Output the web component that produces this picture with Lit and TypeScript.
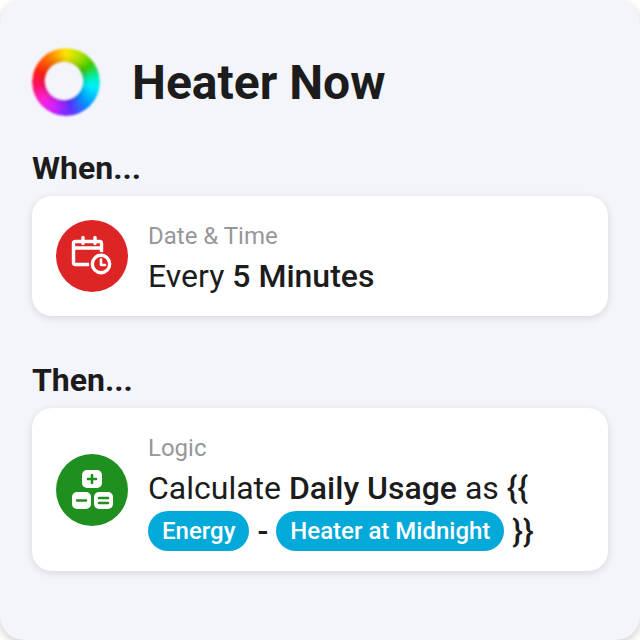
import { LitElement, html, css } from 'lit';
import { customElement } from 'lit/decorators.js';

@customElement('app-root')
export class AppRoot extends LitElement {
  static styles = css`
    :host {
      display: block;
      width: 640px;
      height: 640px;
      background: #fff;
      font-family: Roboto, sans-serif;
      color: #1c1c1c;
      overflow: hidden;
    }

    .page {
      box-sizing: border-box;
      width: 640px;
      height: 640px;
      padding: 48px 32px 0;
      background: #f4f4fb;
      border-radius: 24px;
      box-shadow: 0 3px 10px rgba(0, 0, 0, 0.2);
    }

    .header {
      display: flex;
      align-items: center;
      gap: 32px;
      height: 68px;
      margin-bottom: 32px;
    }

    .logo-blur {
      filter: blur(1px);
    }

    .logo {
      width: 68px;
      height: 68px;
      border-radius: 50%;
      background:
        radial-gradient(circle at 32px 33px, rgba(0, 0, 0, 0.14) 18px, transparent 26px),
        conic-gradient(
          #ffe600 0deg,
          #a8e000 30deg,
          #3fc800 55deg,
          #00f0b0 80deg,
          #00eeff 100deg,
          #0098ff 135deg,
          #6030ff 170deg,
          #d020ff 205deg,
          #ff20d0 235deg,
          #ff1060 265deg,
          #ff2010 290deg,
          #ff7a00 325deg,
          #ffe600 360deg
        );
      -webkit-mask: radial-gradient(circle at 32px 33px, transparent 18.5px, #000 20px);
      mask: radial-gradient(circle at 32px 33px, transparent 18.5px, #000 20px);
    }

    h1 {
      margin: 1px 0 -1px;
      font-size: 48px;
      line-height: 68px;
      font-weight: 700;
    }

    h2 {
      margin: 0 0 8px;
      font-size: 32px;
      line-height: 40px;
      font-weight: 700;
    }

    .card {
      box-sizing: border-box;
      display: flex;
      align-items: center;
      gap: 20px;
      padding: 24px 24px 16px;
      background: #fff;
      border-radius: 20px;
      box-shadow: 0 2px 8px rgba(0, 0, 0, 0.12);
      margin-bottom: 44px;
    }

    .icon {
      flex: none;
      width: 72px;
      height: 72px;
      border-radius: 50%;
    }

    .icon svg {
      display: block;
    }

    .icon.red {
      background: #de2526;
      margin-top: -8px;
    }

    .icon.green {
      background: #1f8f1f;
      margin-top: -7px;
    }

    .body {
      flex: 1;
      min-width: 0;
    }

    .kind {
      font-size: 24px;
      line-height: 32px;
      color: #97979b;
    }

    .line {
      font-size: 32px;
      line-height: 48px;
    }

    .tokens {
      display: flex;
      align-items: flex-start;
      gap: 8px;
      height: 44px;
      margin-top: -1px;
      line-height: 40px;
    }

    .heavy {
      font-weight: 500;
    }

    b {
      font-weight: 500;
    }

    .pill {
      height: 40px;
      padding: 0 14px;
      border-radius: 20px;
      background: #03a9d9;
      color: #fff;
      font-size: 24px;
      font-weight: 500;
      line-height: 40px;
    }
  `;

  render() {
    return html`
      <div class="page">
        <div class="header">
          <div class="logo-blur"><div class="logo"></div></div>
          <h1>Heater Now</h1>
        </div>
        <h2>When...</h2>
        <div class="card">
          <div class="icon red">
            <svg width="72" height="72" viewBox="0 0 72 72" fill="none" stroke="#fff" stroke-width="3.4" stroke-linecap="round" stroke-linejoin="round">
              <rect x="17.5" y="21.5" width="28" height="23" rx="2" />
              <path d="M17.5 28h28" />
              <path d="M27 17.5v6M39 17.5v6" />
              <circle cx="45" cy="44" r="12" fill="#de2526" stroke="none" />
              <circle cx="45" cy="44" r="8.7" />
              <path d="M45 39.5v5.5h4" stroke-width="2.6" />
            </svg>
          </div>
          <div class="body">
            <div class="kind">Date &amp; Time</div>
            <div class="line">Every <b>5 Minutes</b></div>
          </div>
        </div>
        <h2>Then...</h2>
        <div class="card">
          <div class="icon green">
            <svg width="72" height="72" viewBox="0 0 72 72">
              <rect x="26" y="16" width="20" height="18" rx="5" fill="#fff" />
              <rect x="16" y="38" width="19" height="17" rx="5" fill="#fff" />
              <rect x="38" y="38" width="19" height="17" rx="5" fill="#fff" />
              <path d="M32 25h8M36 21v8M21 46.5h9M43 44h9M43 49h9" stroke="#1f8f1f" stroke-width="2.6" stroke-linecap="round" />
            </svg>
          </div>
          <div class="body">
            <div class="kind">Logic</div>
            <div class="line">Calculate <b>Daily Usage</b> as <span class="heavy">{{</span></div>
            <div class="line tokens">
              <span class="pill">Energy</span>
              <span class="heavy">-</span>
              <span class="pill">Heater at Midnight</span>
              <span class="heavy">}}</span>
            </div>
          </div>
        </div>
      </div>
    `;
  }
}
